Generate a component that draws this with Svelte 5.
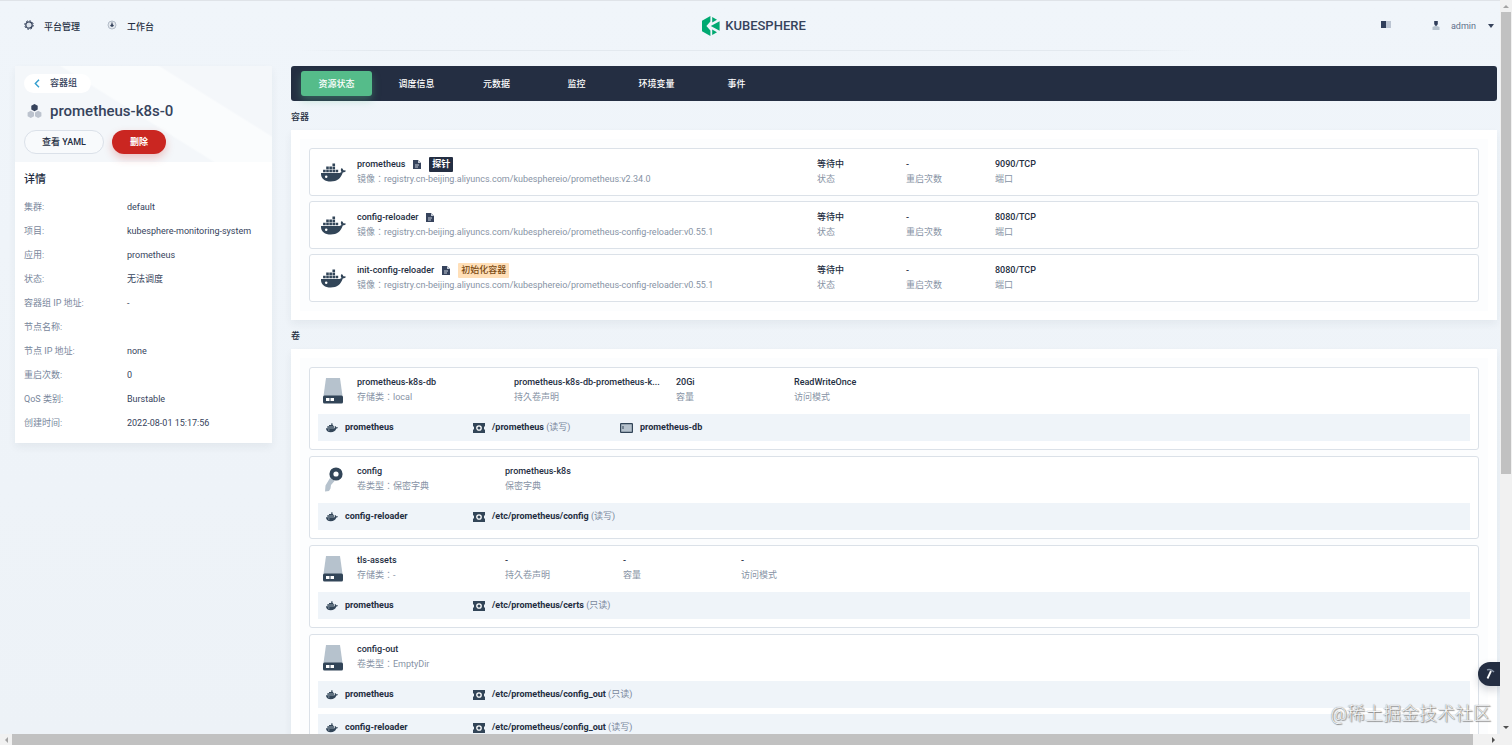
<script>
  const tabs = ["资源状态", "调度信息", "元数据", "监控", "环境变量", "事件"];
  let activeTab = tabs[0];

  const details = [
    ["集群", "default"],
    ["项目", "kubesphere-monitoring-system"],
    ["应用", "prometheus"],
    ["状态", "无法调度"],
    ["容器组 IP 地址", "-"],
    ["节点名称", ""],
    ["节点 IP 地址", "none"],
    ["重启次数", "0"],
    ["QoS 类别", "Burstable"],
    ["创建时间", "2022-08-01 15:17:56"]
  ];

  const registry = "registry.cn-beijing.aliyuncs.com/kubesphereio/";
  const containers = [
    { name: "prometheus", image: "prometheus:v2.34.0", port: "9090/TCP", probe: true },
    { name: "config-reloader", image: "prometheus-config-reloader:v0.55.1", port: "8080/TCP" },
    { name: "init-config-reloader", image: "prometheus-config-reloader:v0.55.1", port: "8080/TCP", init: true }
  ];

  const volumes = [
    {
      name: "prometheus-k8s-db",
      desc: "存储类：local",
      wide: true,
      cols: [
        ["prometheus-k8s-db-prometheus-k...", "持久卷声明"],
        ["20Gi", "容量"],
        ["ReadWriteOnce", "访问模式"]
      ],
      mounts: [{ name: "prometheus", path: "/prometheus", mode: "读写", sub: "prometheus-db" }]
    },
    {
      name: "config",
      desc: "卷类型：保密字典",
      secret: true,
      cols: [["prometheus-k8s", "保密字典"]],
      mounts: [{ name: "config-reloader", path: "/etc/prometheus/config", mode: "读写" }]
    },
    {
      name: "tls-assets",
      desc: "存储类：-",
      cols: [
        ["-", "持久卷声明"],
        ["-", "容量"],
        ["-", "访问模式"]
      ],
      mounts: [{ name: "prometheus", path: "/etc/prometheus/certs", mode: "只读" }]
    },
    {
      name: "config-out",
      desc: "卷类型：EmptyDir",
      cols: [],
      mounts: [
        { name: "prometheus", path: "/etc/prometheus/config_out", mode: "只读" },
        { name: "config-reloader", path: "/etc/prometheus/config_out", mode: "读写" }
      ]
    }
  ];

  // share of the track that each scrollbar thumb covers
  const thumbY = 65;
  const thumbX = 99;
</script>

{#snippet docker()}
  <svg class="docker" viewBox="0 0 24 18" aria-hidden="true">
    <path
      fill="#324558"
      d="M0 9.400h17.600c1 0 1.700-.3 2.100-.8-.8-1-.9-2.400-.2-3.500l.4-.5c.9.6 1.400 1.400 1.500 2.300.9-.2 1.900 0 2.600.5-.5 1.100-1.600 1.600-3.100 1.600C19.200 14.600 15.300 17.600 9.400 17.600 3.100 17.600-.3 14.600 0 9.400z" />
    <path
      fill="#324558"
      d="M2 6.300h2.500v2.500H2zM5 6.300h2.500v2.500H5zM8 6.300h2.500v2.500H8zM11 6.300h2.500v2.500H11zM14 6.300h2.500v2.500H14zM5 3.300h2.500v2.500H5zM8 3.300h2.500v2.500H8zM11 3.300h2.500v2.500H11zM11 .3h2.500v2.500H11z" />
    <circle cx="5" cy="13" r="1.200" fill="#fff" />
  </svg>
{/snippet}

{#snippet whale()}
  <svg width="12" height="10" viewBox="0 0 12 10" aria-hidden="true">
    <path
      fill="#324558"
      d="M0 5.200h8.600l.5-.5c-.3-.7-.2-1.300.2-1.800.5.3.8.7.9 1.300.6-.1 1.200 0 1.800.3-.3.8-.9 1.100-1.700 1.100C9.500 8.200 7.500 9.300 4.800 9.300 1.700 9.300-.1 7.700 0 5.200z" />
    <path fill="#324558" d="M1.300 3.200h7v1.600h-7zM3 1.900h4.200v1.200H3zM5 .5h1.700v1.300H5z" />
    <path fill="#93a1b0" d="M2 6.500h1.500v1H2z" />
  </svg>
{/snippet}

<div class="window">
  <div class="page">
    <header>
      <nav class="menu">
        <a href="#platform">
          <svg width="10" height="10" viewBox="0 0 10 10">
            <circle cx="5" cy="5" r="4.300" fill="none" stroke="#36435c" stroke-width="1" stroke-dasharray="1.700 1.677" />
            <circle cx="5" cy="5" r="3.200" fill="#dfe5ec" stroke="#36435c" stroke-width="1.300" />
          </svg>
          <span>平台管理</span>
        </a>
        <a href="#workbench">
          <svg width="10" height="10" viewBox="0 0 10 10">
            <circle cx="5" cy="5" r="4" fill="#e3e8ee" stroke="#b3bcc8" stroke-width="1" />
            <path d="M5 1.500 5.800 4.500 7 5.500 5.700 6.800H4.300L3 5.500 4.200 4.500z" fill="#36435c" />
          </svg>
          <span>工作台</span>
        </a>
      </nav>
      <a class="logo" href="#home">
        <svg width="20" height="20" viewBox="0 0 20 20">
          <path d="M9.400 0v5.600L5.400 10l4 4.400V20L1 15.200V4.800z" fill="#00a971" />
          <path d="M11.200 1 16 3.800l-4.800 2.600zM18.600 5.200v9.600L9.800 10zM11.200 19v-5.400l4.800 2.600z" fill="#00a971" />
        </svg>
        <span>KUBESPHERE</span>
      </a>
      <div class="user">
        <svg width="12" height="12" viewBox="0 0 12 12">
          <path d="M1 1h5v7H1z" fill="#303e5a" />
          <path d="M6 1h5v7H6z" fill="#bcc5d2" />
        </svg>
        <button>
          <svg width="8" height="12" viewBox="0 0 8 12">
            <path d="M.5 7Q4 5 7.500 7v3H.5z" fill="#b6c2cd" />
            <path d="M2.200 1h3.600v3L4.800 5.800H3.200L2.200 4z" fill="#303e5a" />
          </svg>
          <span>admin</span>
          <svg width="8" height="4" viewBox="0 0 8 4"><path d="M1 0h6L4 4z" fill="#36435c" /></svg>
        </button>
      </div>
    </header>

    <div class="columns">
      <aside>
        <div class="summary">
          <a class="back" href="#pods">
            <svg width="6" height="9" viewBox="0 0 6 9">
              <path d="M5 .7 1.300 4.500 5 8.300" fill="none" stroke="#329dce" stroke-width="1.400" />
            </svg>
            容器组
          </a>
          <h1>
            <svg width="15" height="14" viewBox="0 0 15 14">
              <path d="m7.500 0 3.200 1.800v3.700L7.500 7.300 4.300 5.500V1.800z" fill="#36435c" />
              <path d="m3.800 6.700 3.200 1.800v3.700L3.800 14 .6 12.200V8.500zM11.200 6.700l3.200 1.800v3.700L11.200 14 8 12.200V8.500z" fill="#bcc3ce" />
            </svg>
            prometheus-k8s-0
          </h1>
          <div class="actions">
            <button class="yaml">查看 YAML</button>
            <button class="delete">删除</button>
          </div>
        </div>
        <div class="details">
          <h2>详情</h2>
          <dl>
            {#each details as [label, value]}
              <dt>{label}:</dt>
              <dd>{value}</dd>
            {/each}
          </dl>
        </div>
      </aside>

      <main>
        <nav class="tabs">
          {#each tabs as tab}
            <button class:active={tab === activeTab} onclick={() => (activeTab = tab)}>{tab}</button>
          {/each}
        </nav>

        <h3>容器</h3>
        <section class="containers">
          {#each containers as item}
            <article class="container">
              {@render docker()}
              <div class="name">
                <strong>
                  {item.name}
                  <svg width="8" height="9" viewBox="0 0 8 9">
                    <path d="M0 0h5l3 3v6H0z" fill="#36435c" />
                    <path d="M5 0v3h3zM2 4.500h4v1H2zM2 6.500h3v1H2z" fill="#c4cbd5" />
                  </svg>
                  {#if item.probe}<span class="tag probe">探针</span>{/if}
                  {#if item.init}<span class="tag init">初始化容器</span>{/if}
                </strong>
                <p>镜像：{registry}{item.image}</p>
              </div>
              <div class="cell"><strong>等待中</strong><p>状态</p></div>
              <div class="cell"><strong>-</strong><p>重启次数</p></div>
              <div class="cell"><strong>{item.port}</strong><p>端口</p></div>
            </article>
          {/each}
        </section>

        <h3>卷</h3>
        <section class="volumes">
          {#each volumes as volume}
            <article>
              <div class="head" class:wide={volume.wide}>
                {#if volume.secret}
                  <svg width="20" height="26" viewBox="0 0 20 26">
                    <path d="M7 11 11.500 14 8 18l-.5 3.500L6 24l-4 .5.500-6z" fill="#b6c2cd" />
                    <circle cx="13" cy="7" r="4.600" fill="none" stroke="#324558" stroke-width="4" />
                  </svg>
                {:else}
                  <svg width="20" height="26" viewBox="0 0 20 26">
                    <path d="M3 0h14l2.500 18H.5z" fill="#b6c2cd" />
                    <rect y="17.500" width="20" height="8" rx="1.500" fill="#324558" />
                    <path d="M3 20h3.500v3H3zM7.500 20H11v3H7.500z" fill="#fff" />
                  </svg>
                {/if}
                <div><strong>{volume.name}</strong><p>{volume.desc}</p></div>
                {#each volume.cols as [value, label]}
                  <div><strong>{value}</strong><p>{label}</p></div>
                {/each}
              </div>
              <ul>
                {#each volume.mounts as mount}
                  <li>
                    <span>{@render whale()}<b>{mount.name}</b></span>
                    <span>
                      <svg width="12" height="10" viewBox="0 0 12 10">
                        <path d="M0 0h12v3l-1 1v2l1 1v3H0V7l1-1V4L0 3z" fill="#324558" />
                        <circle cx="6" cy="5" r="2.200" fill="none" stroke="#fff" stroke-width="1.300" />
                      </svg>
                      <b>{mount.path} <i>({mount.mode})</i></b>
                    </span>
                    {#if mount.sub}
                      <span>
                        <svg width="13" height="10" viewBox="0 0 13 10">
                          <rect x=".6" y=".6" width="11.800" height="8.800" rx=".5" fill="#b6c2cd" stroke="#324558" stroke-width="1.200" />
                          <path d="M3 3v3" stroke="#324558" />
                        </svg>
                        <b>{mount.sub}</b>
                      </span>
                    {/if}
                  </li>
                {/each}
              </ul>
            </article>
          {/each}
        </section>
      </main>
    </div>

    <button class="toolbox" aria-label="工具箱">
      <svg width="10" height="12" viewBox="0 0 10 12">
        <path d="M2 1.800Q6 .5 9 4" fill="none" stroke="#8d99ab" stroke-width="1.400" />
        <path d="M6 3 2.500 10.500" stroke="#fff" stroke-width="1.800" />
      </svg>
    </button>
    <div class="watermark">@稀土掘金技术社区</div>
  </div>

  <div class="bar vertical">
    <svg viewBox="0 0 12 12"><path d="M3 8h6L6 5z" fill="#a3a3a3" /></svg>
    <div class="track"><div class="thumb" style="height: {thumbY}%"></div></div>
    <svg viewBox="0 0 12 12"><path d="M3 4h6L6 7z" fill="#505050" /></svg>
  </div>
  <div class="bar horizontal">
    <svg viewBox="0 0 12 12"><path d="M8 3v6L5 6z" fill="#a3a3a3" /></svg>
    <div class="track"><div class="thumb" style="width: {thumbX}%"></div></div>
    <svg viewBox="0 0 12 12"><path d="M4 3v6l3-3z" fill="#505050" /></svg>
  </div>
</div>

<style>
  :global(body) {
    overflow: hidden;
  }
  .window {
    display: grid;
    grid-template: minmax(0, 1fr) 11px / minmax(0, 1fr) 12px;
    height: 100vh;
    background: #f1f1f1;
    color: #242e42;
    font: 9px/15px Roboto, "Noto Sans CJK SC", sans-serif;
  }
  .page {
    position: relative;
    overflow: hidden;
    background: linear-gradient(#f0f5fa, #edf2f7);
    border-top: 1px solid #dfe3e8;
  }
  h1,
  h2,
  h3,
  p,
  dl,
  dd,
  ul {
    margin: 0;
    padding: 0;
  }
  a {
    color: inherit;
    text-decoration: none;
  }
  button {
    padding: 0;
    border: 0;
    background: none;
    color: inherit;
    font: inherit;
    cursor: pointer;
  }
  svg {
    display: block;
    flex: none;
  }

  header {
    display: grid;
    grid-template-columns: 1fr auto 1fr;
    align-items: center;
    height: 50px;
    padding: 0 5px 0 12px;
    background: linear-gradient(90deg, transparent 20%, #e3e9ef 25% 75%, transparent 80%) bottom / 100% 1px no-repeat;
  }
  .menu {
    display: flex;
    gap: 27px;
    padding: 2px 0 0 12px;
    font-weight: 500;
  }
  .menu a {
    display: flex;
    gap: 10px;
  }
  .logo {
    display: flex;
    align-items: center;
    gap: 4px;
    color: #36435c;
    font: 500 13px/20px Roboto, sans-serif;
  }
  .user,
  .user button {
    display: flex;
    align-items: center;
    justify-content: flex-end;
  }
  .user {
    gap: 40px;
    color: #5f708a;
  }
  .user button {
    gap: 11px;
  }

  .columns {
    display: flex;
    align-items: flex-start;
    gap: 19px;
    padding: 15px 3px 0 15px;
  }
  aside {
    flex: 0 0 257px;
    background: #fff;
    box-shadow: 0 4px 8px rgba(36, 46, 66, 0.06);
  }
  .summary {
    padding: 8px 9px 8px;
    background: linear-gradient(32deg, transparent 48%, #fafcfd 49% 72%, transparent 73%) #f4f7fa;
  }
  .back {
    display: inline-flex;
    align-items: center;
    gap: 10px;
    padding: 2px 14px 2px 10px;
    border-radius: 10px;
    background: #fff;
    color: #36435c;
    font-weight: 500;
  }
  h1 {
    display: flex;
    align-items: center;
    gap: 8px;
    padding: 8px 0 9px 3px;
    color: #36435c;
    font-size: 15px;
    font-weight: 500;
    line-height: 20px;
  }
  .actions {
    display: flex;
    gap: 8px;
  }
  .actions button {
    height: 24px;
    border-radius: 12px;
    font-weight: 500;
  }
  .yaml {
    width: 80px;
    border: 1px solid #dbe1e9;
    background: #f8fafc;
  }
  .actions .delete {
    width: 54px;
    background: #ca2621;
    box-shadow: 0 4px 8px rgba(202, 38, 33, 0.25);
    color: #fff;
    font-weight: 700;
  }
  .details {
    padding: 8px 9px 8px;
  }
  h2 {
    font-size: 11px;
    font-weight: 500;
    line-height: 20px;
  }
  dl {
    display: grid;
    grid-template-columns: 103px 1fr;
    padding-top: 5px;
    line-height: 24px;
  }
  dt {
    color: #79879c;
  }
  dd {
    min-height: 24px;
    color: #36435c;
  }

  main {
    flex: 1;
    min-width: 0;
  }
  .tabs {
    display: flex;
    gap: 9px;
    padding: 5px 10px;
    border-radius: 3px;
    background: #242e42;
  }
  .tabs button {
    width: 71px;
    height: 25px;
    padding-top: 1px;
    border-radius: 3px;
    color: #fff;
    font-weight: 500;
  }
  .tabs .active {
    background: #55bc8a;
    box-shadow: 0 4px 8px rgba(85, 188, 138, 0.35);
  }
  h3 {
    padding: 9px 0 5px;
    font-size: 9px;
    font-weight: 500;
  }
  section {
    display: flex;
    flex-direction: column;
    padding: 18px;
    background: #fcfdfe;
    box-shadow: 0 4px 8px rgba(36, 46, 66, 0.06);
    outline: 9px solid #fff;
    outline-offset: -9px;
  }
  .containers {
    gap: 5px;
  }
  .volumes {
    gap: 6px;
  }
  article {
    border: 1px solid #dbe1e8;
    border-radius: 3px;
    background: #fff;
  }
  strong {
    display: block;
    font-weight: 500;
    white-space: nowrap;
  }
  /* the TC face centres the full-width colon */
  p {
    color: #8793a5;
    font-family: Roboto, "Noto Sans CJK TC", sans-serif;
    white-space: nowrap;
  }
  .docker {
    width: 25px;
    height: 19px;
  }
  .container {
    display: flex;
    align-items: center;
    padding: 8px 0 8px 11px;
  }
  .name {
    flex: 0 1 460px;
    padding-left: 11px;
  }
  .name strong {
    display: flex;
    align-items: center;
    gap: 8px;
    height: 15px;
  }
  .tag {
    padding: 0 3px;
    border-radius: 1px;
    line-height: 15px;
  }
  .probe {
    background: #242e42;
    color: #fff;
    font-weight: 700;
  }
  .init {
    background: #ffdfb8;
    color: #7a4a12;
  }
  .cell {
    width: 89px;
  }
  .head {
    display: grid;
    grid-template-columns: 34px 148px 118px 118px 118px;
    padding: 7px 13px 9px;
  }
  .head.wide {
    grid-template-columns: 34px 157px 162px 118px 118px;
  }
  .head svg {
    margin-top: 3px;
  }
  ul {
    display: flex;
    flex-direction: column;
    gap: 6px;
    padding: 0 8px 8px;
    list-style: none;
  }
  li {
    display: flex;
    padding: 6px 8px;
    background: #eff4f9;
  }
  li span {
    display: flex;
    align-items: center;
    gap: 7px;
    min-width: 147px;
  }
  b {
    font-weight: 700;
  }
  i {
    color: #79879c;
    font-style: normal;
    font-weight: 400;
  }

  .toolbox {
    position: absolute;
    right: 0;
    bottom: 48px;
    display: flex;
    align-items: center;
    width: 22px;
    height: 24px;
    padding-left: 7px;
    border-radius: 12px 0 0 12px;
    background: #242e42;
    box-shadow: 0 4px 8px rgba(36, 46, 66, 0.2);
  }
  .watermark {
    position: absolute;
    right: 9px;
    bottom: 7px;
    color: #f4f6f8;
    font-size: 18px;
    font-weight: 300;
    line-height: 26px;
    text-shadow: 0 0 1px #666, 1px 1px 1px #888;
  }

  .bar {
    display: flex;
    background: #f1f1f1;
  }
  .bar svg {
    width: 12px;
    height: 12px;
  }
  .vertical {
    flex-direction: column;
  }
  .track {
    flex: 1;
  }
  .thumb {
    height: 100%;
    background: #c1c1c1;
  }
  .vertical .thumb {
    margin: 0 1px;
  }
</style>
